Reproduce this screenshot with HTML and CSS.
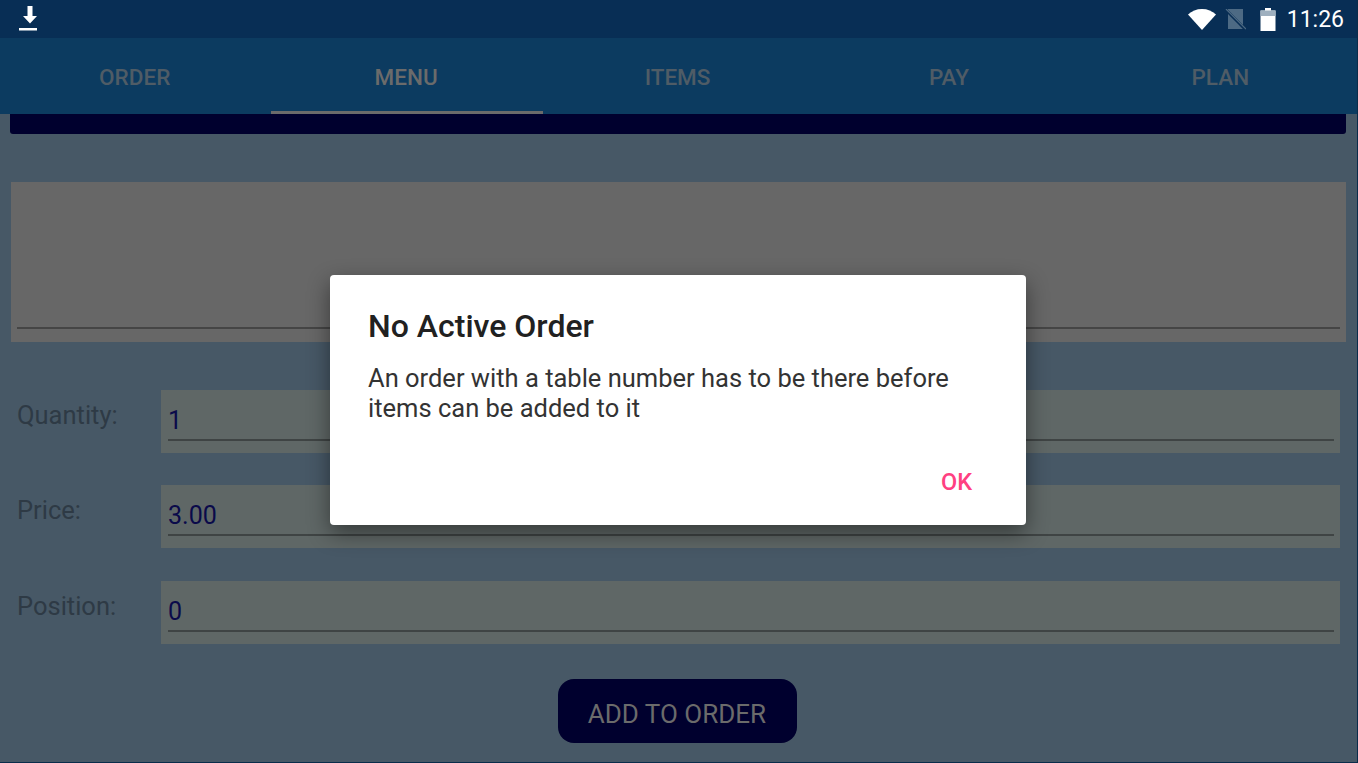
FILE: index.html
```html
<!DOCTYPE html>
<html lang="en">
<head>
  <meta charset="UTF-8" />
  <title>Menu</title>
  <link rel="stylesheet" href="styles.css">
</head>
<body>
  <div class="statusbar">
    <svg class="download-icon" width="22" height="26" viewBox="0 0 22 26">
      <path d="M8.500 0h5v10h4.500L11 17.500 4 10h4.500z" fill="#fff"/>
      <rect x="0" y="22" width="18" height="2.500" fill="#fff"/>
    </svg>
    <div class="status-right">
      <svg class="wifi-icon" width="28" height="22" viewBox="0 0 28 22">
        <path d="M0 6.500C3.800 3 8.500 1 14 1s10.200 2 14 5.500L14 22z" fill="#fff"/>
      </svg>
      <svg class="sim-icon" width="21" height="21" viewBox="0 0 21 21">
        <path d="M3 0h15v20H3z" fill="#4d6a84"/>
        <path d="M0 0l21 21" stroke="#082e55" stroke-width="3"/>
        <path d="M1 0l20 20" stroke="#4d6a84" stroke-width="1.200"/>
      </svg>
      <svg width="16" height="23" viewBox="0 0 16 23">
        <path d="M5 0h6v2.500h4.500V23H.5V2.500H5z" fill="#fff"/>
        <path d="M.5 2.500h15V8H.5z" fill="#9fb0bf"/>
      </svg>
      <span class="clock">11:26</span>
    </div>
  </div>

  <div class="tabs">
    <div class="tab">ORDER</div>
    <div class="tab active">MENU</div>
    <div class="tab">ITEMS</div>
    <div class="tab">PAY</div>
    <div class="tab">PLAN</div>
  </div>

  <div class="content">
    <div class="top-bar"></div>

    <div class="note-box">
      <div class="note-line"></div>
    </div>

    <div class="form-row">
      <div class="form-label">Quantity:</div>
      <div class="form-input"><div class="form-value">1</div></div>
    </div>
    <div class="form-row">
      <div class="form-label">Price:</div>
      <div class="form-input"><div class="form-value">3.00</div></div>
    </div>
    <div class="form-row">
      <div class="form-label">Position:</div>
      <div class="form-input"><div class="form-value">0</div></div>
    </div>

    <button class="add-btn">ADD TO ORDER</button>
  </div>

  <div class="dialog">
    <div class="dialog-title">No Active Order</div>
    <div class="dialog-text">An order with a table number has to be there before items can be added to it</div>
    <div class="dialog-actions">
      <span class="dialog-ok">OK</span>
    </div>
  </div>
</body>
</html>
```

FILE: styles.css
```css
html, body {
  height: 100%;
}

body {
  margin: 0;
  height: 763px;
  display: flex;
  flex-direction: column;
  overflow: hidden;
  position: relative;
  font-family: Roboto, sans-serif;
  background-color: #475866;
  border-right: 1px solid #0a2c4a;
  border-bottom: 1px solid #0a2c4a;
  box-sizing: border-box;
}

.statusbar {
  height: 38px;
  flex-shrink: 0;
  background-color: #082e55;
  display: flex;
  align-items: center;
  justify-content: space-between;
  padding: 0 13px 0 19px;
}

.download-icon {
  width: 22px;
  height: 26px;
}

.status-right {
  display: flex;
  align-items: center;
  gap: 11px;
}

.wifi-icon {
  margin-right: -2px;
}

.sim-icon {
  margin-right: 3px;
}

.clock {
  color: #fff;
  font-size: 23px;
}

.tabs {
  height: 76px;
  flex-shrink: 0;
  background-color: #0c3b60;
  display: flex;
}

.tab {
  flex: 1;
  display: flex;
  align-items: center;
  justify-content: center;
  box-sizing: border-box;
  padding: 5px 2px 0 0;
  font-size: 22.500px;
  font-weight: 500;
  color: #4f5c66;
  border-bottom: 3px solid transparent;
}

.tab.active {
  color: #6b6b6b;
  border-bottom-color: #6b6b6b;
}

.content {
  flex-grow: 1;
  display: flex;
  flex-direction: column;
  padding: 0 11px 0 10px;
}

.top-bar {
  height: 20px;
  background-color: #00002e;
  border-radius: 0 0 3px 3px;
  margin-bottom: 48px;
}

.note-box {
  height: 160px;
  margin-left: 1px;
  box-sizing: border-box;
  background-color: #676767;
  padding: 145px 6px 0;
  margin-bottom: 48px;
}

.note-line {
  height: 2px;
  background-color: #454545;
}

.form-row {
  display: flex;
  height: 63px;
  margin-bottom: 32.400px;
}

.form-label {
  width: 144px;
  margin-left: 7px;
  padding-top: 10px;
  font-size: 25.500px;
  color: #2e3a45;
}

.form-input {
  flex-grow: 1;
  background-color: #5f6766;
  padding: 0 6px 0 7px;
  margin-right: 6px;
  display: flex;
}

.form-value {
  flex-grow: 1;
  height: 51px;
  box-sizing: border-box;
  padding-top: 16px;
  font-size: 25px;
  line-height: 30px;
  color: #0a0a4a;
  border-bottom: 2px solid #3f4444;
}

.add-btn {
  align-self: center;
  width: 239px;
  height: 64px;
  margin: 3px 2px 0 0;
  padding-top: 6px;
  border: none;
  border-radius: 16px;
  background-color: #00002e;
  color: #6b6b6b;
  font-family: Roboto, sans-serif;
  font-size: 26px;
}

.dialog {
  position: absolute;
  left: 330px;
  top: 275px;
  width: 696px;
  height: 250px;
  box-sizing: border-box;
  padding: 34px 38px 0;
  background-color: #fff;
  border-radius: 4px;
  box-shadow: 0 8px 22px rgba(0, 0, 0, 0.45);
  display: flex;
  flex-direction: column;
}

.dialog-title {
  font-size: 32px;
  line-height: 34px;
  font-weight: 500;
  color: #212121;
  margin-bottom: 20px;
}

.dialog-text {
  font-size: 25.500px;
  line-height: 30px;
  color: #333;
}

.dialog-actions {
  display: flex;
  justify-content: flex-end;
  margin-top: 45px;
  padding-right: 16px;
}

.dialog-ok {
  font-size: 23.500px;
  font-weight: 500;
  color: #ff4081;
}
```
